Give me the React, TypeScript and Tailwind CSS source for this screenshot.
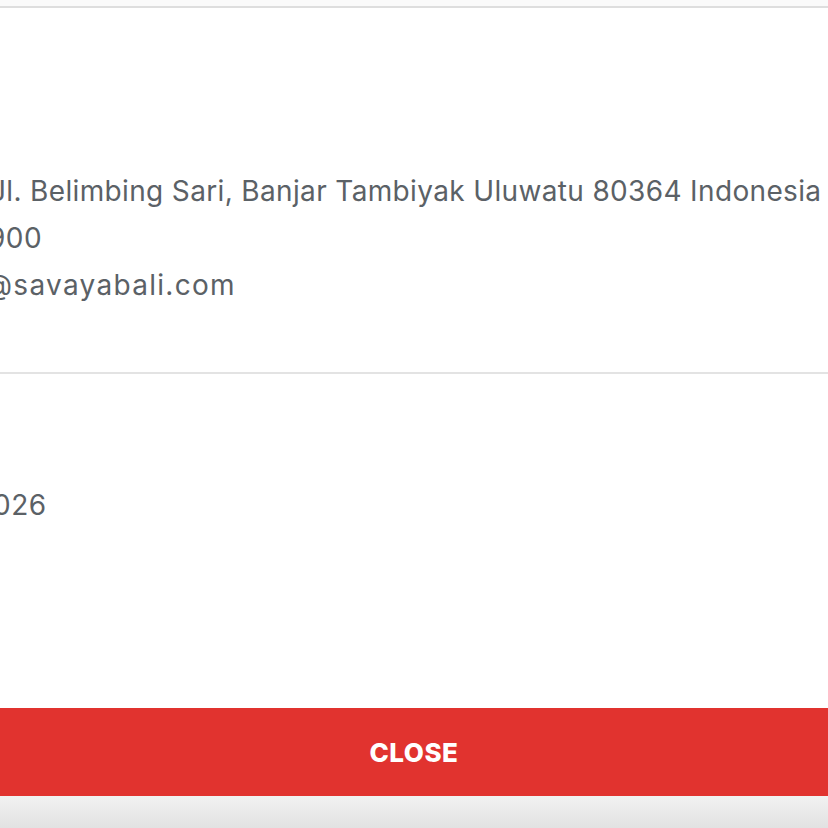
import React from "react";

export default function App() {
  const font = { fontFamily: "Inter, 'Noto Sans', sans-serif" };
  return (
    <div className="w-[828px] h-[828px] overflow-hidden bg-white flex flex-col" style={font}>
      <div className="h-[6px] bg-[#fafafa]" />
      <div className="h-[2px] bg-[#dedede]" />
      <div className="h-[364px] pt-[160px] text-[28px] leading-[47px] text-[#5b6166] whitespace-nowrap">
        <div className="-ml-[10px] tracking-[0.35px]">Jl. Belimbing Sari, Banjar Tambiyak Uluwatu 80364 Indonesia</div>
        <div className="-ml-[12px] tracking-[0.5px]">900</div>
        <div className="-ml-[15px] tracking-[1.3px]">@savayabali.com</div>
      </div>
      <div className="h-[2px] bg-[#e3e3e3]" />
      <div className="h-[334px] pt-[108px] text-[28px] leading-[47px] text-[#5b6166] whitespace-nowrap">
        <div className="-ml-[7px] tracking-[0.5px]">026</div>
      </div>
      <button className="h-[88px] w-full bg-[#e1332f] text-white font-extrabold text-[26px] tracking-[0.5px] flex items-center justify-center">
        CLOSE
      </button>
      <div className="flex-1 bg-gradient-to-b from-[#f2f2f2] to-[#e2e2e2]" />
    </div>
  );
}
